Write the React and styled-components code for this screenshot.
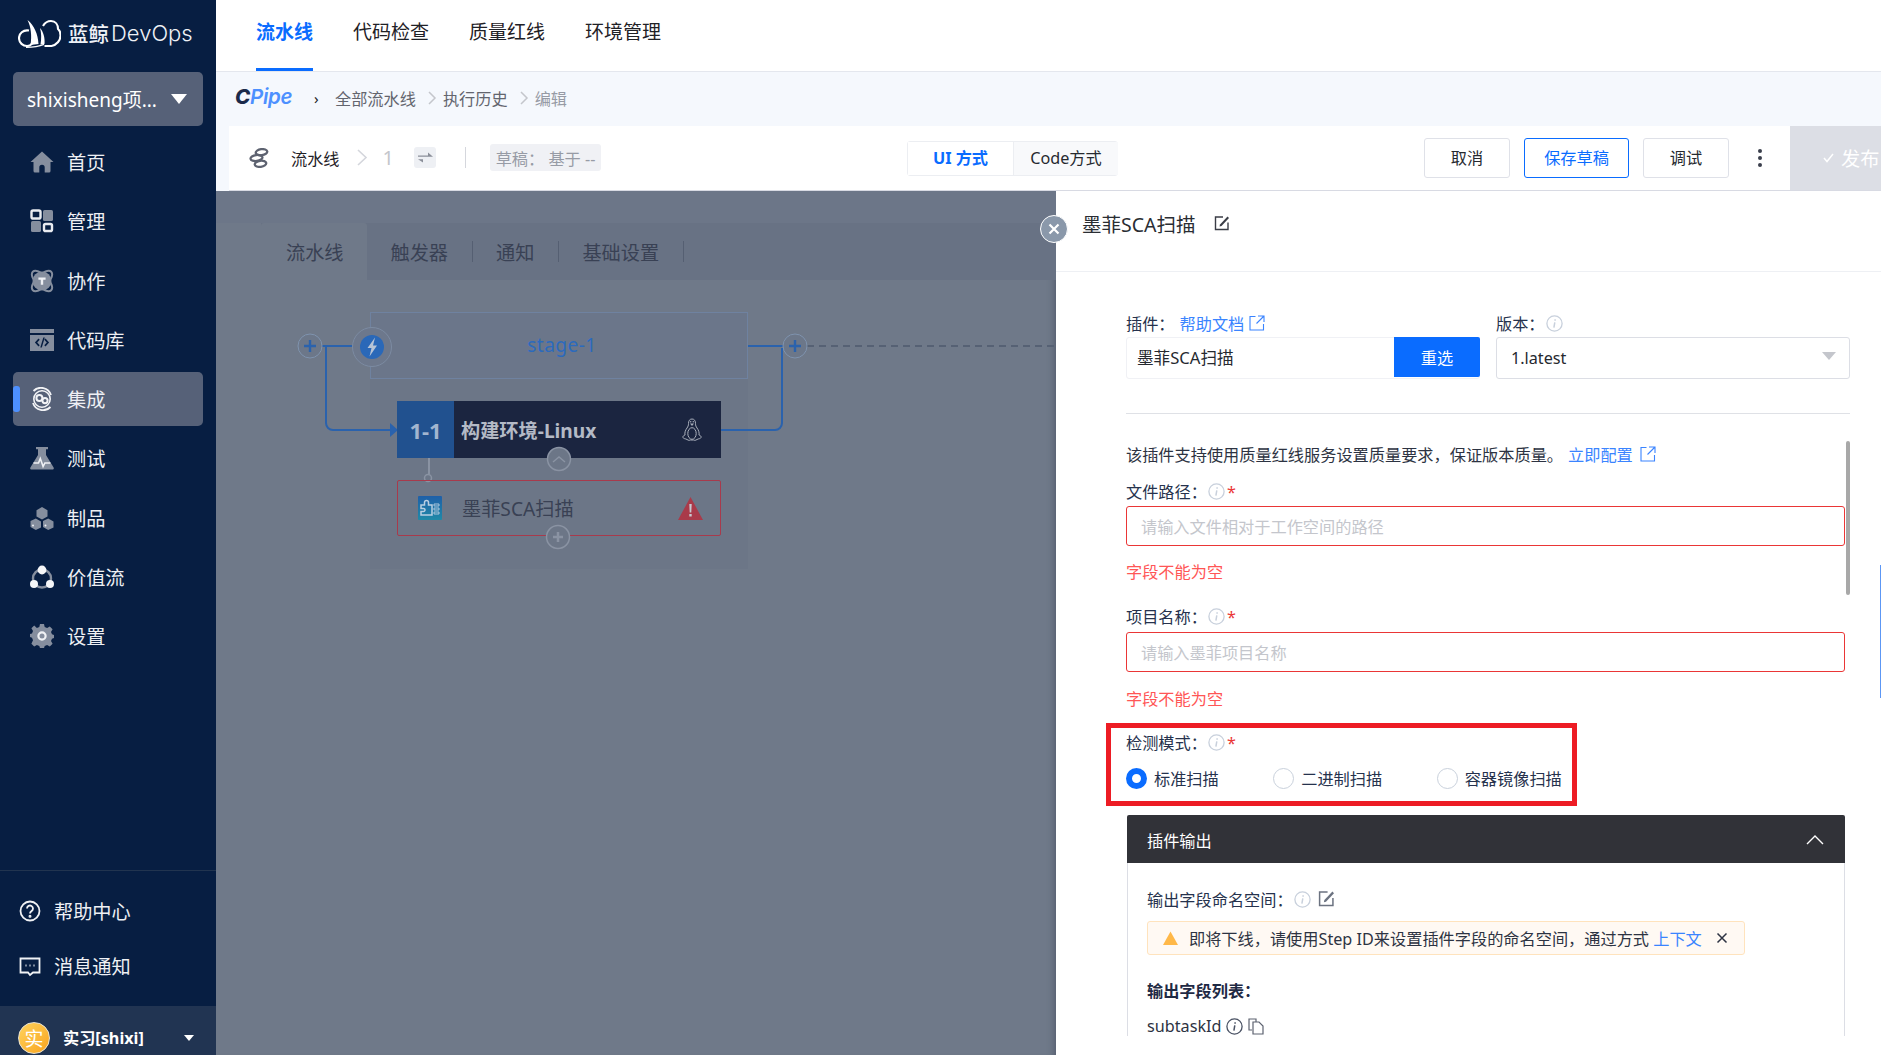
import React from "react";
import styled, { createGlobalStyle } from "styled-components";

const Global = createGlobalStyle`
  html, body { margin: 0; padding: 0; height: 100%; overflow: hidden; background: #fff; }
  * { box-sizing: border-box; }
  body { font-family: "Noto Sans", "Noto Sans CJK SC", sans-serif; font-size: 16.2px; color: #26324d; }
  #root { height: 100%; }
`;

const Page = styled.div`display: flex; width: 1881px; height: 1055px; overflow: hidden;`;

/* sidebar */
const Sidebar = styled.aside`width: 216px; flex: none; background: #071e42; color: #fff; display: flex; flex-direction: column;`;
const Brand = styled.div`height: 72px; display: flex; align-items: center; padding: 0 0 6px 18px; gap: 7px; color: #eef1f6;`;
const BrandCn = styled.span`font-size: 20.5px; font-weight: 500;`;
const BrandEn = styled.span`font-family: "Inter", sans-serif; font-size: 22px; font-weight: 300; margin-left: -5px;`;
const ProjectPicker = styled.div`height: 54px; margin: 0 13px; border-radius: 5px; background: #566178; display: flex; align-items: center; justify-content: space-between; padding: 0 16px 0 14px; font-size: 19px;`;
const Caret = styled.span`width: 0; height: 0; border-left: 8px solid transparent; border-right: 8px solid transparent; border-top: 10px solid #fff;`;
const NavList = styled.nav`display: flex; flex-direction: column; gap: 5.3px; margin-top: 9px;`;
const NavItem = styled.div`
  position: relative; height: 54px; margin: 0 13px; border-radius: 5px; display: flex; align-items: center; gap: 13px; padding-left: 17px; font-size: 19.2px; color: #eef0f4;
  background: ${p => (p.$active ? "#566178" : "transparent")};
  ${p => p.$active && `&::before { content: ""; position: absolute; left: 0; top: 14px; width: 7px; height: 26px; border-radius: 3px; background: #4d90ff; }`}
`;
const SideSpacer = styled.div`flex: 1;`;
const SideFoot = styled.div`height: 136px; flex: none; border-top: 1px solid #21344f; padding-top: 22px; display: flex; flex-direction: column; gap: 19px;`;
const FootLink = styled.div`height: 36px; display: flex; align-items: center; gap: 13px; padding-left: 19px; font-size: 19.2px; color: #eef0f4;`;
const UserRow = styled.div`height: 49px; flex: none; background: #213452; display: flex; align-items: flex-start; padding: 16px 0 0 18px; overflow: hidden;`;
const Avatar = styled.div`width: 32px; height: 32px; flex: none; border-radius: 50%; background: linear-gradient(135deg, #ffd35c, #f9a41f); border: 1px solid #e9e3d2; color: #fff; font-size: 19px; display: flex; align-items: center; justify-content: center;`;
const UserName = styled.span`margin-left: 13px; font-size: 16.2px; font-weight: 700; line-height: 32px; width: 121px; flex: none;`;
const UserCaret = styled.span`margin-top: 13px; width: 0; height: 0; border-left: 5.5px solid transparent; border-right: 5.5px solid transparent; border-top: 6px solid #fff;`;

/* top */
const Content = styled.div`flex: 1; min-width: 0; display: flex; flex-direction: column;`;
const TopNav = styled.header`height: 72px; flex: none; background: #fff; border-bottom: 1px solid #e4e7ee; display: flex; padding-left: 40px; gap: 40px;`;
const TopTab = styled.div`
  height: 71px; display: flex; align-items: center; padding-bottom: 7px; font-size: 19px;
  color: ${p => (p.$active ? "#0a6cff" : "#1f2126")}; font-weight: ${p => (p.$active ? 700 : 400)};
  border-bottom: 3px solid ${p => (p.$active ? "#0a6cff" : "transparent")};
`;
const Crumbs = styled.div`height: 54px; flex: none; background: #f5f8fd; display: flex; align-items: center; padding: 0 0 2px 19px; color: #63656e;`;
const CPipe = styled.span`font-family: "Inter", sans-serif; font-size: 20.5px; font-style: italic; font-weight: 600; color: #4d90ff; width: 59px; letter-spacing: -0.3px; margin-top: -3px;`;
const CPipeC = styled.span`color: #1b2a4a; font-weight: 800;`;
const CrumbArrow = styled.span`font-size: 15px; color: #222; width: 41px; padding-left: 20px;`;
const CrumbSep = styled.svg`width: 9px; height: 14px; margin: 0 6px 0 12px; flex: none;`;
const CrumbLast = styled.span`color: #979ba5;`;

const ToolbarWrap = styled.div`height: 65px; flex: none; background: #f5f8fd; padding-left: 13px;`;
const Toolbar = styled.div`height: 65px; background: #fff; display: flex; align-items: center; border-bottom: 1px solid #d8dae3;`;
const ToolLeft = styled.div`width: 678px; flex: none; display: flex; align-items: center; padding: 0 0 1px 20px; color: #1f2126;`;
const ToolName = styled.span`margin-left: 22px;`;
const ToolChevron = styled.svg`width: 11px; height: 17px; margin-left: 17px; flex: none;`;
const ToolNum = styled.span`margin-left: 15px; font-size: 20px; color: #c4c6cc;`;
const SwapBtn = styled.span`margin-left: 20px; width: 22px; height: 21px; border-radius: 3px; background: #eef0f4; display: flex; align-items: center; justify-content: center;`;
const ToolDivider = styled.span`width: 1px; height: 21px; background: #d5d7dd; margin: 0 24px 0 29px;`;
const DraftChip = styled.span`width: 111px; height: 27px; border-radius: 3px; background: #f0f1f5; color: #979ba5; display: flex; align-items: center; justify-content: center; white-space: pre;`;
const ModeSwitch = styled.div`width: 211px; height: 35px; border: 1px solid #eceef2; border-radius: 3px; display: flex;`;
const ModeItem = styled.div`
  display: flex; align-items: center; justify-content: center; flex: none; width: 105px; padding-bottom: 2px;
  color: ${p => (p.$active ? "#0a6cff" : "#26292f")}; font-weight: ${p => (p.$active ? 700 : 400)};
  background: ${p => (p.$active ? "#fff" : "#f8f9fb")}; ${p => !p.$active && "border-left: 1px solid #eceef2;"}
`;
const ToolRight = styled.div`margin-left: auto; display: flex; align-items: center; height: 64px;`;
const ToolBtn = styled.button`
  font: inherit; font-size: 16.2px; height: 40px; padding: 0 0 2px; background: #fff; border-radius: 3px; cursor: pointer; margin-right: ${p => p.$mr ?? 14}px;
  width: ${p => p.$w}px;
  color: ${p => (p.$primary ? "#0a6cff" : "#26292f")};
  border: 1px solid ${p => (p.$primary ? "#0a6cff" : "#dfe1e8")};
`;
const Dots = styled.div`width: 20px; margin: 0 20px 0 21px; display: flex; flex-direction: column; align-items: center; gap: 3px;`;
const Dot = styled.i`width: 4px; height: 4px; border-radius: 50%; background: #3a3f4c;`;
const PublishBtn = styled.div`width: 91px; height: 64px; background: #dcdee5; color: #fff; font-size: 19.2px; display: flex; align-items: center; padding-left: 33px; white-space: nowrap; overflow: hidden; gap: 7px;`;

/* main */
const Main = styled.main`flex: 1; min-height: 0; display: flex;`;
const PipelinePane = styled.section`width: 840px; flex: none; background: #6f7989; display: flex; flex-direction: column; box-shadow: inset -8px 0 8px -8px rgba(40,48,66,.55);`;
const PaneTop = styled.div`height: 32px; flex: none; background: #6c7688;`;
const Tabs = styled.div`height: 57px; flex: none; background: #687284; margin-left: 45px; display: flex; align-items: center; font-size: 19.2px; color: #394154;`;
const TabCell = styled.div`
  height: 100%; display: flex; align-items: center; padding: 0 23.5px; white-space: nowrap;
  background: ${p => (p.$active ? "#6f7989" : "transparent")};
  ${p => p.$active ? "padding: 0 0 0 25px; width: 106px; border-radius: 3px 3px 0 0;" : "&::after { content: ''; width: 1px; height: 21px; background: #555f72; margin-left: 24px; margin-right: -24px; }"}
`;
const Canvas = styled.div`position: relative; flex: 1;`;
const Lines = styled.svg`position: absolute; left: 0; top: 0; width: 100%; height: 100%; z-index: ${p => p.$z};`;
const StageHead = styled.div`position: absolute; left: 154px; top: 32px; width: 378px; height: 67px; background: #6b768a; border: 1px solid #6f82a0; display: flex; align-items: center; justify-content: center; color: #2b6abd; font-size: 19.2px; padding: 0 0 2px 6px; letter-spacing: .4px;`;
const StageBody = styled.div`position: absolute; left: 154px; top: 99px; width: 378px; height: 190px; background: #6c7687;`;
const JobCard = styled.div`position: absolute; left: 181px; top: 121px; width: 324px; height: 57px; background: #1b2540; display: flex; align-items: center; color: #b4bac6; font-size: 19.2px; font-weight: 700; z-index: 2;`;
const JobNum = styled.div`width: 57px; height: 100%; background: #21518f; display: flex; align-items: center; justify-content: center; color: #a2b5cf; font-size: 22px;`;
const JobTitle = styled.div`flex: 1; padding-left: 7px;`;
const JobOs = styled.svg`width: 20px; height: 24px; margin-right: 19px; color: #aab0bc;`;
const AtomCard = styled.div`position: absolute; left: 181px; top: 200px; width: 324px; height: 56px; border: 1px solid #a83a4c; border-radius: 2px; display: flex; align-items: center; padding-left: 20px; color: #394154; font-size: 19.2px; z-index: 2;`;
const AtomName = styled.span`margin-left: 20px; flex: 1;`;
const AtomWarn = styled.svg`width: 25px; height: 23px; margin-right: 17px;`;

/* panel */
const Panel = styled.aside`position: relative; flex: 1; min-width: 0; background: #fff; display: flex; flex-direction: column;`;
const CloseBtn = styled.div`position: absolute; left: -16px; top: 24px; width: 28px; height: 28px; border-radius: 50%; background: #8a98aa; border: 1px solid #fff; display: flex; align-items: center; justify-content: center; z-index: 3;`;
const PanelHead = styled.div`height: 81px; flex: none; border-bottom: 1px solid #eef0f4; display: flex; align-items: center; padding: 0 0 16px 26px; gap: 18px; font-size: 19.5px; color: #2a2d33;`;
const PanelBody = styled.div`position: relative; flex: 1; min-height: 0; padding: 42px 0 0 70px; overflow: hidden;`;
const ScrollThumb = styled.div`position: absolute; right: 31px; top: 169px; width: 4px; height: 154px; border-radius: 2px; background: #a8a8a8;`;
const EdgeLine = styled.div`position: absolute; right: 0; top: 293px; width: 1px; height: 133px; background: #5c97f5;`;
const PickerGrid = styled.div`display: grid; grid-template-columns: 354px 354px; column-gap: 16px;`;
const FieldLabel = styled.div`
  display: flex; align-items: center; height: 20px; padding-bottom: 2px; gap: ${p => p.$gap ?? 1}px; color: #26324d; margin-top: ${p => p.$mt ?? 0}px;
`;
const Req = styled.span`color: #ea3636; margin-left: 1px; line-height: 16px; padding-top: 2px;`;
const Link = styled.a`color: #3a84ff;`;
const HelpLink = styled(Link)`margin-left: 5px;`;
const IconSlot = styled.span`display: flex; flex: none; margin-left: ${p => p.$ml}px;`;
const PickBox = styled.div`margin-top: 3px; height: 42px; border: 1px solid #f0f1f5; border-radius: 3px; display: flex; align-items: flex-start; color: #26292f;`;
const PickText = styled.div`flex: 1; line-height: 40px; padding-left: 10px; font-size: 16.6px;`;
const ReselectBtn = styled.button`font: inherit; width: 86px; height: 40px; margin: -1px -1px 0 0; border: 0; border-radius: 0 2px 2px 0; background: #0a6cff; color: #fff;`;
const SelectBox = styled.div`margin-top: 3px; height: 42px; border: 1px solid #dcdee5; border-radius: 3px; display: flex; align-items: center; justify-content: space-between; padding: 0 13px 0 14px; color: #26292f;`;
const SelectCaret = styled.span`width: 0; height: 0; border-left: 7px solid transparent; border-right: 7px solid transparent; border-top: 8px solid #c4c6cc; margin-bottom: 4px;`;
const Rule = styled.hr`width: 724px; margin: 34px 0 0; border: 0; border-top: 1px solid #dfe1e6; height: 0;`;
const Notice = styled.div`margin-top: 30px; height: 20px; display: flex; align-items: center; gap: 7px; color: #2d3342; white-space: nowrap;`;
const LinkText = styled(Link)`margin-left: -2px;`;
const TextInput = styled.div`width: 719px; height: 40px; margin-top: ${p => p.$mt}px; border: 1px solid #ea3636; border-radius: 3px; padding-left: 14px; display: flex; align-items: center; color: #c4c6cc;`;
const ErrorText = styled.div`margin-top: ${p => p.$mt}px; height: 20px; line-height: 20px; color: #ff5656;`;
const MarkFrame = styled.div`width: 471px; height: 83px; margin: 14px 0 0 -20px; border: 5px solid #ed1c24; padding: 5px 15px;`;
const RadioRow = styled.div`display: flex; margin-top: 14px; height: 22px; align-items: center;`;
const RadioItem = styled.label`display: flex; align-items: center; gap: 7px; color: #26324d; margin-right: 54.5px; white-space: nowrap;`;
const RadioDot = styled.span`
  width: 21px; height: 21px; border-radius: 50%; flex: none;
  border: ${p => (p.$on ? "6px solid #0a6cff" : "1px solid #c9d1dc")}; background: #fff;
`;
const OutputBox = styled.section`width: 718px; margin: 9px 0 0 1px; height: 220px; display: flex; flex-direction: column;`;
const OutputHead = styled.div`height: 48px; flex: none; background: #313238; border-radius: 2px 2px 0 0; color: #fff; display: flex; align-items: center; justify-content: space-between; padding: 1px 21px 0 20px;`;
const OutputBody = styled.div`flex: 1; border: solid #dcdee5; border-width: 0 1px; padding: 27px 0 0 19px; color: #2d3342;`;
const WarnBox = styled.div`width: 598px; height: 34px; margin-top: 11px; background: #fff9f3; border: 1px solid #ffe3bd; border-radius: 3px; display: flex; align-items: center; padding-left: 15px; white-space: nowrap;`;
const WarnText = styled.span`margin-left: 11px;`;
const WarnX = styled.svg`width: 12px; height: 12px; margin-left: 14px; flex: none;`;
const ListTitle = styled.div`margin-top: 26px; font-weight: 700; height: 20px; line-height: 20px; color: #1f2a44;`;
const FieldRow = styled.div`margin-top: 15px; height: 20px; display: flex; align-items: center; gap: 5px; color: #2d3342;`;

/* icons */
const NavSvg = ({ children }) => (
  <svg width="24" height="24" viewBox="0 0 24 24" fill="#858e9e" style={{ flex: "none" }}>{children}</svg>
);
const icons = {
  home: <path fillRule="evenodd" d="M12 1.5 23.5 12H20.5v9a1.5 1.5 0 0 1-1.5 1.5H5A1.5 1.5 0 0 1 3.5 21v-9H.5L12 1.5Zm-2.700 21h5.400v-5a2.700 2.700 0 0 0-5.400 0v5Z" />,
  manage: (<>
    <rect x="1.500" y="1.500" width="9" height="8" rx="1.600" fill="none" stroke="#e9ebf0" strokeWidth="2.400" />
    <rect x="13" y="1" width="10" height="11" rx="1.600" />
    <rect x="1" y="12" width="10" height="11" rx="1.600" />
    <rect x="14" y="15" width="8" height="7" rx="1.600" fill="none" stroke="#e9ebf0" strokeWidth="2.400" />
  </>),
  team: (<>
    <ellipse cx="12" cy="12" rx="13" ry="6" transform="rotate(45 12 12)" fill="none" stroke="#858e9e" strokeWidth="2" />
    <ellipse cx="12" cy="12" rx="13" ry="6" transform="rotate(-45 12 12)" fill="none" stroke="#858e9e" strokeWidth="2" />
    <circle cx="12" cy="12" r="9.500" />
    <path d="M8.400 8.600h7.200v2.200h-2.400v5h-2.400v-5H8.400z" fill="#eef0f4" />
  </>),
  code: (<>
    <rect x="0" y="1" width="24" height="4" />
    <path fillRule="evenodd" d="M0 7h24v16H0V7Zm8.500 3.500-3.600 4 3.600 4 1.200-1.200-2.500-2.800 2.500-2.800-1.200-1.200Zm7 0-1.200 1.200 2.500 2.800-2.500 2.800 1.200 1.200 3.600-4-3.600-4Zm-2.200-1-3 10h1.500l3-10z" />
  </>),
  ci: (<>
    <path d="M20.500 20A10.500 10.500 0 0 1 3 16M3.500 4A10.500 10.500 0 0 1 21 8" fill="none" stroke="#f2f3f6" strokeWidth="1.800" />
    <circle cx="12" cy="12" r="8.200" fill="none" stroke="#f2f3f6" strokeWidth="1.600" />
    <circle cx="9.400" cy="11" r="3" fill="none" stroke="#f2f3f6" strokeWidth="2" />
    <circle cx="15" cy="13.600" r="2.600" fill="none" stroke="#f2f3f6" strokeWidth="2" />
  </>),
  test: (<>
    <path d="M6 1h12v2.200h-2V9l7.600 12.400c.6 1 0 2.100-1.200 2.100H1.600C.4 23.500-.2 22.400.4 21.400L8 9V3.200H6z" />
    <path d="M3.500 17h5l1.800-4.500 2.800 8 1.800-3.500h5.500" fill="none" stroke="#eef0f4" strokeWidth="1.600" />
  </>),
  artifact: (<>
    <path d="m12 1 5.500 3.200v6.200L12 13.600 6.500 10.400V4.200z" />
    <path d="m5.800 12.400 5.200 3v6L5.800 24 .5 21v-6z" />
    <path d="m18.200 12.400 5.300 3v6L18.200 24 13 21v-6z" />
    <circle cx="3" cy="19.500" r="1" fill="#eef0f4" /><circle cx="15.500" cy="19.500" r="1" fill="#eef0f4" />
  </>),
  stream: (<>
    <circle cx="12" cy="13.500" r="9" fill="none" stroke="#858e9e" strokeWidth="2.400" />
    <circle cx="12" cy="5" r="4.400" fill="#f5f6f8" /><circle cx="4" cy="19" r="4" fill="#f5f6f8" /><circle cx="20" cy="19" r="4" fill="#f5f6f8" />
  </>),
  gear: (<>
    <path d="M10 0h4l.7 3 2.400 1 2.700-1.600 2.800 2.800L21 7.900l1 2.400 2 .7v3l-2 .7-1 2.400 1.600 2.700-2.800 2.800-2.700-1.600-2.400 1-.7 2.100h-4l-.7-2.100-2.400-1-2.700 1.600-2.800-2.800L3 16.200l-1-2.400-2-.7v-3l2-.7 1-2.400-1.600-2.700 2.800-2.800L6.900 4l2.400-1L10 0Z" />
    <circle cx="12" cy="12" r="3.600" fill="none" stroke="#f0f2f5" strokeWidth="2.200" />
  </>),
};

const Logo = () => (
  <svg width="43" height="29" viewBox="0 0 43 29" fill="none" stroke="#fff" strokeWidth="2.100" style={{ flex: "none" }}>
    <path d="M11 11.500C5 10.500 1 14.500 1 19c0 5 4 8 8 8 2 0 4-1 5-2.500" />
    <path d="M25 7c2-3.500 5-5 8-5 4.500 0 7 3.500 7 8 2 1.500 2.500 3.500 2.500 6.500 0 5-4 9.500-9 10.500h-7" />
    <path d="M9.500 1C16 6 20 15 20.500 25l-8 1C14 17 13 8 9.500 1Z" fill="#fff" stroke="none" />
    <path d="M22 9c3.500 4 5 10 4.500 16l-4 .5c1-5.500 1-11.500-.5-16.500Z" fill="#fff" stroke="none" />
    <path d="M8 28.300c5 0 12-.5 18-3" strokeWidth="1.400" />
  </svg>
);

const Info = ({ dark }) => (
  <svg width="17" height="17" viewBox="0 0 17 17" fill="none" style={{ flex: "none" }}>
    <circle cx="8.500" cy="8.500" r="7.600" stroke={dark ? "#4a5264" : "#c8d0dc"} strokeWidth="1.300" />
    <path d="M9.100 4.300v1.500M8.800 7.300 7.900 12.600" stroke={dark ? "#4a5264" : "#c8d0dc"} strokeWidth="1.500" />
  </svg>
);
const ExtLink = () => (
  <svg width="16" height="16" viewBox="0 0 16 16" fill="none" stroke="#3a84ff" strokeWidth="1.100" style={{ flex: "none" }}>
    <path d="M6.500 1.500H1v13.500h13.500V9M9 1h6v6M15 1 7.500 8.500" />
  </svg>
);
const EditIcon = ({ color = "#4a4e5a", size = 15 }) => (
  <svg width={size} height={size} viewBox="0 0 15 15" fill="none" stroke={color} strokeWidth="1.400" style={{ flex: "none" }}>
    <path d="M9 1H1.500v12.500H14V6.500" /><path d="M13.500 .5 6 8.500 5.500 10.500l2-.5L15 2z" fill={color} stroke="none" />
  </svg>
);
const Plus = ({ cx, cy }) => (
  <g>
    <circle cx={cx} cy={cy} r="12" fill="#6c7789" stroke="#7f93ae" strokeWidth="1" />
    <path d={`M${cx - 6} ${cy}h12M${cx} ${cy - 6}v12`} stroke="#2a62ad" strokeWidth="2.400" />
  </g>
);

const TOP = ["流水线", "代码检查", "质量红线", "环境管理"];
const NAV = [["home", "首页"], ["manage", "管理"], ["team", "协作"], ["code", "代码库"], ["ci", "集成"], ["test", "测试"], ["artifact", "制品"], ["stream", "价值流"], ["gear", "设置"]];

export default function App() {
  return (
    <Page>
      <Global />
      <Sidebar>
        <Brand>
          <Logo />
          <BrandCn>蓝鲸</BrandCn>
          <BrandEn>DevOps</BrandEn>
        </Brand>
        <ProjectPicker>shixisheng项...<Caret /></ProjectPicker>
        <NavList>
          {NAV.map(([k, t]) => (
            <NavItem key={k} $active={k === "ci"}><NavSvg>{icons[k]}</NavSvg>{t}</NavItem>
          ))}
        </NavList>
        <SideSpacer />
        <SideFoot>
          <FootLink>
            <svg width="22" height="22" viewBox="0 0 22 22" fill="none" stroke="#f0f2f5" strokeWidth="1.800"><circle cx="11" cy="11" r="9.500" /><path d="M8 8.500a3 3 0 1 1 4.500 2.600c-1 .6-1.500 1.100-1.500 2.400" /><circle cx="11" cy="16.200" r=".6" fill="#f0f2f5" /></svg>
            帮助中心
          </FootLink>
          <FootLink>
            <svg width="22" height="22" viewBox="0 0 22 22" fill="none" stroke="#f0f2f5" strokeWidth="1.800"><path d="M1.500 3.500h19v14h-6.500l-3 2.500-2-2.500H1.500z" /><path d="M6.500 10.500h1M10.500 10.500h1M14.500 10.500h1" strokeWidth="2" /></svg>
            消息通知
          </FootLink>
        </SideFoot>
        <UserRow>
          <Avatar>实</Avatar>
          <UserName>实习[shixi]</UserName>
          <UserCaret />
        </UserRow>
      </Sidebar>

      <Content>
        <TopNav>
          {TOP.map((t, i) => <TopTab key={t} $active={i === 0}>{t}</TopTab>)}
        </TopNav>
        <Crumbs>
          <CPipe><CPipeC>C</CPipeC>Pipe</CPipe>
          <CrumbArrow>›</CrumbArrow>
          全部流水线
          <CrumbSep viewBox="0 0 9 14" fill="none" stroke="#c4c6cc" strokeWidth="1.500"><path d="m1 1 6 6-6 6" /></CrumbSep>
          执行历史
          <CrumbSep viewBox="0 0 9 14" fill="none" stroke="#c4c6cc" strokeWidth="1.500"><path d="m1 1 6 6-6 6" /></CrumbSep>
          <CrumbLast>编辑</CrumbLast>
        </Crumbs>
        <ToolbarWrap>
          <Toolbar>
            <ToolLeft>
              <svg width="20" height="20" viewBox="0 0 20 20" fill="none" stroke="#5d6270" strokeWidth="2.300" style={{ flex: "none" }}>
                <ellipse cx="12.500" cy="4.200" rx="5.800" ry="3" transform="rotate(-8 12.500 4.200)" />
                <ellipse cx="7.500" cy="10" rx="6" ry="3" transform="rotate(-8 7.500 10)" />
                <ellipse cx="11.500" cy="15.800" rx="5.800" ry="3" transform="rotate(-8 11.500 15.800)" />
              </svg>
              <ToolName>流水线</ToolName>
              <ToolChevron viewBox="0 0 11 17" fill="none" stroke="#d4d6dc" strokeWidth="1.600"><path d="m1 1 8 7.500L1 16" /></ToolChevron>
              <ToolNum>1</ToolNum>
              <SwapBtn>
                <svg width="15" height="12" viewBox="0 0 15 12" fill="#8b8f99"><path d="M0 3.500h10V.5l5 4.300H0zM15 7.200H5v3.300L0 7.200h15z" /></svg>
              </SwapBtn>
              <ToolDivider />
              <DraftChip>草稿： 基于 --</DraftChip>
            </ToolLeft>
            <ModeSwitch>
              <ModeItem $active>UI 方式</ModeItem>
              <ModeItem>Code方式</ModeItem>
            </ModeSwitch>
            <ToolRight>
              <ToolBtn $w={86}>取消</ToolBtn>
              <ToolBtn $w={105} $primary>保存草稿</ToolBtn>
              <ToolBtn $w={86} $mr={0}>调试</ToolBtn>
              <Dots><Dot /><Dot /><Dot /></Dots>
              <PublishBtn>
                <svg width="11" height="10" viewBox="0 0 11 10" fill="none" stroke="#fff" strokeWidth="1.500"><path d="m1 5 3 3.500L10 1" /></svg>
                发布
              </PublishBtn>
            </ToolRight>
          </Toolbar>
        </ToolbarWrap>

        <Main>
          <PipelinePane>
            <PaneTop />
            <Tabs>
              <TabCell $active>流水线</TabCell>
              <TabCell>触发器</TabCell>
              <TabCell>通知</TabCell>
              <TabCell>基础设置</TabCell>
            </Tabs>
            <Canvas>
              <StageBody />
              <StageHead>stage-1</StageHead>
              <Lines $z={1} fill="none">
                <path d="M106 66h30" stroke="#2a62ad" strokeWidth="2" />
                <path d="M110 66v77a7 7 0 0 0 7 7h60" stroke="#2a62ad" strokeWidth="2" />
                <path d="m174 143 8 7-8 7z" fill="#2a62ad" />
                <path d="M532 66h35" stroke="#2a62ad" strokeWidth="2" />
                <path d="M505 150h54a7 7 0 0 0 7-7V68" stroke="#2a62ad" strokeWidth="2" />
                <path d="M591 66h250" stroke="#566174" strokeWidth="2" strokeDasharray="7 5" />
                <path d="M213 178v16" stroke="#8a93a3" strokeWidth="2" />
                <circle cx="212" cy="198" r="3.500" fill="#6c7687" stroke="#8a93a3" strokeWidth="1.500" />
                <Plus cx={94} cy={66} />
                <Plus cx={579} cy={66} />
                <circle cx="156" cy="67" r="19.500" fill="#6d788c" stroke="#7c8ba2" strokeWidth="1" />
                <circle cx="156" cy="67" r="12" fill="#2a68b8" />
                <path d="M159 57.500l-7.500 10.500h4l-2 8.500 7.500-11h-4z" fill="#b7c4d6" />
              </Lines>
              <JobCard>
                <JobNum>1-1</JobNum>
                <JobTitle>构建环境-Linux</JobTitle>
                <JobOs viewBox="0 0 20 24" fill="none" stroke="currentColor" strokeWidth="1">
                  <path d="M10 1c-2.500 0-3.500 2-3.500 4.500 0 2-.5 3-1.500 4.500C3.500 12 2.500 14.500 3 17c-1 .5-2.500 1-2 2.500.5 1.500 2.500 1 4 2 1.500 1 2.500 1 3.500.5h3c1 .5 2 .5 3.500-.5 1.500-1 3.500-.5 4-2 .5-1.500-1-2-2-2.500.5-2.500-.5-5-2-7-1-1.500-1.500-2.500-1.500-4.500C13.500 3 12.500 1 10 1Z" />
                  <ellipse cx="10" cy="15.500" rx="4.200" ry="5.800" />
                  <path d="M8 5.500h4l-2 2.500z" fill="currentColor" stroke="none" />
                  <circle cx="8.700" cy="3.800" r=".7" fill="currentColor" stroke="none" /><circle cx="11.300" cy="3.800" r=".7" fill="currentColor" stroke="none" />
                </JobOs>
              </JobCard>
              <Lines $z={3} fill="none">
                <circle cx="343" cy="179" r="11.500" fill="#6c7687" stroke="#8a93a3" strokeWidth="1.500" />
                <path d="m337 182 6-5 6 5" stroke="#8a93a3" strokeWidth="1.500" />
                <circle cx="342" cy="257" r="11.500" fill="#6c7687" stroke="#8a93a3" strokeWidth="1.500" />
                <path d="M337 257h10M342 252v10" stroke="#8a93a3" strokeWidth="2.500" />
              </Lines>
              <AtomCard>
                <svg width="24" height="24" viewBox="0 0 24 24" style={{ flex: "none" }}>
                  <defs><linearGradient id="plug" x1="0" y1="0" x2="0" y2="1"><stop offset="0" stopColor="#1f5fa8" /><stop offset="1" stopColor="#1f8aa8" /></linearGradient></defs>
                  <rect width="24" height="24" rx="1" fill="url(#plug)" />
                  <path d="M3 9h3.500V6.500a2 2 0 0 1 4 0V9H14v10H3v-3.500h2.500a1.500 1.500 0 0 0 0-3H3z" fill="none" stroke="#b9cfe2" strokeWidth="1.500" />
                  <path d="M16 8h5v2h-5zM16 12h5v2h-5zM16 16h5v2h-5z" fill="none" stroke="#b9cfe2" strokeWidth=".9" />
                </svg>
                <AtomName>墨菲SCA扫描</AtomName>
                <AtomWarn viewBox="0 0 25 23"><path d="M12.500 0 25 23H0z" fill="#a93a4a" /><path d="M11.300 7h2.400l-.4 8.500h-1.600zM11.300 17h2.400v2.400h-2.400z" fill="#c7c9d0" /></AtomWarn>
              </AtomCard>
            </Canvas>
          </PipelinePane>

          <Panel>
            <CloseBtn>
              <svg width="12" height="12" viewBox="0 0 12 12" fill="none" stroke="#fff" strokeWidth="2.200"><path d="m1.500 1.500 9 9M10.500 1.500l-9 9" /></svg>
            </CloseBtn>
            <PanelHead>
              墨菲SCA扫描
              <EditIcon color="#3a3d46" />
            </PanelHead>
            <PanelBody>
              <ScrollThumb />
              <EdgeLine />
              <PickerGrid>
                <div>
                  <FieldLabel $gap={0}>插件：<HelpLink>帮助文档</HelpLink><IconSlot $ml={5}><ExtLink /></IconSlot></FieldLabel>
                  <PickBox><PickText>墨菲SCA扫描</PickText><ReselectBtn>重选</ReselectBtn></PickBox>
                </div>
                <div>
                  <FieldLabel>版本：<Info /></FieldLabel>
                  <SelectBox>1.latest<SelectCaret /></SelectBox>
                </div>
              </PickerGrid>
              <Rule />
              <Notice>
                该插件支持使用质量红线服务设置质量要求，保证版本质量。
                <LinkText>立即配置</LinkText>
                <ExtLink />
              </Notice>
              <FieldLabel $mt={18}>文件路径：<Info /><Req>*</Req></FieldLabel>
              <TextInput $mt={4}>请输入文件相对于工作空间的路径</TextInput>
              <ErrorText $mt={16}>字段不能为空</ErrorText>
              <FieldLabel $mt={25}>项目名称：<Info /><Req>*</Req></FieldLabel>
              <TextInput $mt={5}>请输入墨菲项目名称</TextInput>
              <ErrorText $mt={17}>字段不能为空</ErrorText>
              <MarkFrame>
                <FieldLabel>检测模式：<Info /><Req>*</Req></FieldLabel>
                <RadioRow>
                  <RadioItem><RadioDot $on />标准扫描</RadioItem>
                  <RadioItem><RadioDot />二进制扫描</RadioItem>
                  <RadioItem><RadioDot />容器镜像扫描</RadioItem>
                </RadioRow>
              </MarkFrame>
              <OutputBox>
                <OutputHead>
                  插件输出
                  <svg width="18" height="10" viewBox="0 0 18 10" fill="none" stroke="#fff" strokeWidth="1.400"><path d="m1 9 8-8 8 8" /></svg>
                </OutputHead>
                <OutputBody>
                  <FieldLabel>输出字段命名空间：<Info /><IconSlot $ml={6}><EditIcon color="#6b7280" size={16} /></IconSlot></FieldLabel>
                  <WarnBox>
                    <svg width="15" height="14" viewBox="0 0 15 14" style={{ flex: "none" }}><path d="M7.500 0.500 15 14H0z" fill="#ffb848" /></svg>
                    <WarnText>即将下线，请使用Step ID来设置插件字段的命名空间，通过方式 <Link>上下文</Link></WarnText>
                    <WarnX viewBox="0 0 12 12" fill="none" stroke="#2d3342" strokeWidth="1.500"><path d="m1.500 1.500 9 9M10.500 1.500l-9 9" /></WarnX>
                  </WarnBox>
                  <ListTitle>输出字段列表：</ListTitle>
                  <FieldRow>
                    subtaskId
                    <Info dark />
                    <svg width="16" height="17" viewBox="0 0 16 17" fill="none" stroke="#5d6270" strokeWidth="1.200"><path d="M4 12H1V1h7v3" /><path d="M5 4h6l4 4v8H5z" /></svg>
                  </FieldRow>
                </OutputBody>
              </OutputBox>
            </PanelBody>
          </Panel>
        </Main>
      </Content>
    </Page>
  );
}
